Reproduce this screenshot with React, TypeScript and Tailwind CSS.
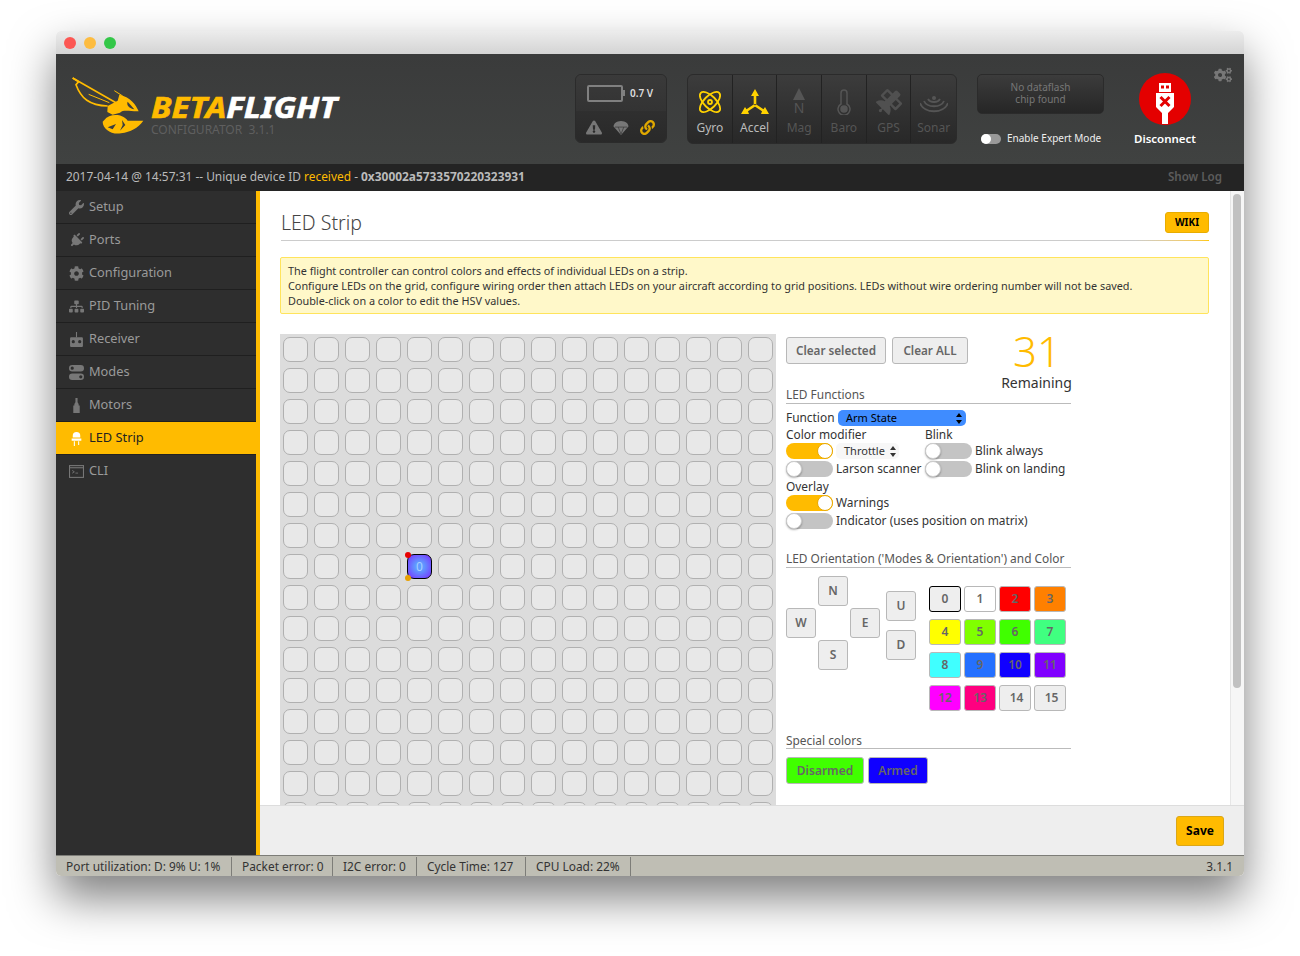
import { FaWrench, FaPlug, FaCog, FaSitemap, FaCogs, FaExclamationTriangle, FaLink, FaSatellite } from 'react-icons/fa';

const NAV = ['Setup', 'Ports', 'Configuration', 'PID Tuning', 'Receiver', 'Modes', 'Motors', 'LED Strip', 'CLI'];

const COLORS: [string, string][] = [
  ['0', 'bg-[#eeeeee] border-black'],
  ['1', 'bg-white'],
  ['2', 'bg-[#ff0000]'],
  ['3', 'bg-[#ff8000]'],
  ['4', 'bg-[#ffff00]'],
  ['5', 'bg-[#80ff00]'],
  ['6', 'bg-[#40ff00]'],
  ['7', 'bg-[#40ff80]'],
  ['8', 'bg-[#40ffff]'],
  ['9', 'bg-[#2570ff]'],
  ['10', 'bg-[#1000ff]'],
  ['11', 'bg-[#8000ff]'],
  ['12', 'bg-[#ff00ff]'],
  ['13', 'bg-[#ff0080]'],
  ['14', 'bg-[#eeeeee] pl-[3px]'],
  ['15', 'bg-[#eeeeee] pl-[3px]'],
];

function NavIcon({ name }: { name: string }) {
  const cls = 'h-[15px] w-[15px]';
  if (name === 'Setup') return <FaWrench className={cls} />;
  if (name === 'Ports') return <FaPlug className={`${cls} rotate-45`} />;
  if (name === 'Configuration') return <FaCog className={cls} />;
  if (name === 'PID Tuning') return <FaSitemap className={cls} />;
  if (name === 'Receiver')
    return (
      <svg viewBox="0 0 14 14" className={cls}>
        <path d="M6.500 0h1v5h-1z" fill="currentColor" />
        <path fillRule="evenodd" fill="currentColor" d="M2 5h10a1 1 0 0 1 1 1v7a1 1 0 0 1-1 1H2a1 1 0 0 1-1-1V6a1 1 0 0 1 1-1zM4 7.500a1.500 1.500 0 1 0 0 3 1.500 1.500 0 0 0 0-3zM10 7.500a1.500 1.500 0 1 0 0 3 1.500 1.500 0 0 0 0-3z" />
      </svg>
    );
  if (name === 'Modes')
    return (
      <svg viewBox="0 0 14 14" className={cls}>
        <path fillRule="evenodd" fill="currentColor" d="M3 0h8a3 3 0 0 1 0 6H3a3 3 0 0 1 0-6zM3 1.500a1.500 1.500 0 1 0 0 3 1.500 1.500 0 0 0 0-3z" />
        <path fillRule="evenodd" fill="currentColor" d="M3 8h8a3 3 0 0 1 0 6H3a3 3 0 0 1 0-6zM11 9.500a1.500 1.500 0 1 0 0 3 1.500 1.500 0 0 0 0-3z" />
      </svg>
    );
  if (name === 'Motors')
    return (
      <svg viewBox="0 0 14 14" className={cls}>
        <path fill="currentColor" d="M6 0h2v4l1 1.500V7h1v7H4V7h1V5.500L6 4z" />
      </svg>
    );
  if (name === 'LED Strip')
    return (
      <svg viewBox="0 0 14 14" className={cls}>
        <path fill="white" d="M3.500 6V4.500a3.500 3.500 0 0 1 7 0V6zM2.500 7h9v2h-9zM4.500 9.500h1V14h-1zM8.500 9.500h1V13h-1z" />
      </svg>
    );
  return (
    <svg viewBox="0 0 14 14" className={cls}>
      <rect x="0.500" y="1.500" width="13" height="11" fill="none" stroke="currentColor" />
      <path d="M0.500 3.500h13" stroke="currentColor" />
      <path d="M3 6l2 1.300L3 8.600M6 8.500h2.500" stroke="currentColor" strokeWidth="0.800" fill="none" />
    </svg>
  );
}

function Wasp() {
  return (
    <svg viewBox="0 0 270 210" className="h-[70px] w-[90px]">
      <g fill="none" stroke="#ffbb00">
        <path d="M20 24L150 98" strokeWidth="5" />
        <path d="M20 24L38 35L30 44C45 85 70 106 125 108" strokeWidth="5" />
        <path d="M68 73L130 98" strokeWidth="3" />
        <path d="M145 62L170 78" strokeWidth="3" />
      </g>
      <path fill="#ffbb00" d="M160 74C195 82 210 105 218 124C195 125 172 118 162 128L140 134L124 126L125 108L155 92z" />
      <path fill="#3c3e3d" d="M185 95L205 118C190 115 180 105 185 95z" />
      <path fill="#ffbb00" d="M115 150C130 130 170 130 185 152L232 152C215 175 195 185 165 190C135 195 110 175 110 155z" />
      <path fill="#3c3e3d" d="M125 172L150 162L140 178zM168 150L178 165L162 182L170 165z" />
    </svg>
  );
}

function Gyro() {
  return (
    <svg viewBox="0 0 26 26" className="h-[26px] w-[26px]" fill="none" stroke="#ffd200" strokeWidth="1.800">
      <ellipse cx="13" cy="13" rx="13" ry="6" transform="rotate(45 13 13)" />
      <ellipse cx="13" cy="13" rx="13" ry="6" transform="rotate(-45 13 13)" />
      <circle cx="13" cy="13" r="2" />
    </svg>
  );
}

function Accel() {
  return (
    <svg viewBox="0 0 28 26" className="h-[26px] w-[28px]" fill="#ffd200">
      <path d="M14 0l4 7h-2.700v8h-2.600V7H10z" />
      <path d="M0 25l4-7 1.500 2.300 7.500-5 1.500 2-7.500 5L8 25z" />
      <path d="M28 25l-4-7-1.500 2.300-7.500-5-1.500 2 7.500 5L20 25z" />
    </svg>
  );
}

function Baro() {
  return (
    <svg viewBox="0 0 14 26" className="h-[26px] w-[14px]" fill="none" stroke="#555555" strokeWidth="1.500">
      <path d="M4 15V4a3 3 0 0 1 6 0v11a6 6 0 1 1-6 0z" />
      <circle cx="7" cy="20" r="3" fill="#555555" />
    </svg>
  );
}

function Sonar() {
  return (
    <svg viewBox="0 0 28 24" className="h-[24px] w-[28px]" fill="none" stroke="#555555" strokeWidth="1.800">
      <circle cx="14" cy="7" r="2" fill="#555555" stroke="none" />
      <path d="M8 8c2 4 10 4 12 0M4 10c3 7 17 7 20 0M0 12c4 11 24 11 28 0" />
    </svg>
  );
}

function Parachute() {
  return (
    <svg viewBox="0 0 16 15" className="h-[14px] w-[16px]" fill="#777777">
      <path d="M8 0C3 0 0 3 0 6l8 9 8-9c0-3-3-6-8-6z" />
      <path d="M1.500 6.500h13M5 6.500L8 14M11 6.500L8 14" stroke="#333333" strokeWidth="0.700" fill="none" />
    </svg>
  );
}

function UsbOff() {
  return (
    <svg viewBox="0 0 52 52" className="h-[52px] w-[52px]">
      <circle cx="26" cy="26" r="26" fill="#e40000" />
      <path fill="white" d="M20 10h12v9h-12z" />
      <path fill="#e40000" d="M22 12.500h3v3h-3zM27 12.500h3v3h-3z" />
      <path fill="white" d="M17 20h18v14l-6 6v11h-6V40l-6-6z" />
      <path d="M21.500 24l9 9M30.500 24l-9 9" stroke="#e40000" strokeWidth="3" />
    </svg>
  );
}

function Sensor({ label, icon, on, last }: { label: string; icon: React.ReactNode; on?: boolean; last?: boolean }) {
  return (
    <div className={`flex w-[45px] flex-col items-center ${last ? '' : 'border-r border-[#222222]'}`}>
      <div className="flex h-[40px] items-end justify-center">{icon}</div>
      <div className={`mt-[5px] text-[12px] leading-[16px] ${on ? 'text-[#bbbbbb]' : 'text-[#555555]'}`}>{label}</div>
    </div>
  );
}

function Toggle({ on }: { on?: boolean }) {
  return (
    <div className={`flex h-[16px] w-[47px] shrink-0 items-center rounded-full ${on ? 'justify-end bg-[#ffbb00]' : 'justify-start bg-[#c4c4c4]'}`}>
      <div className={`h-[16px] w-[16px] rounded-full bg-white ${on ? 'border border-[#e8a800]' : 'border border-[#cccccc] shadow-[0_1px_2px_rgba(0,0,0,0.3)]'}`} />
    </div>
  );
}

function GrayBtn({ children, className }: { children: React.ReactNode; className: string }) {
  return (
    <div className={`flex items-center justify-center rounded-[3px] border border-[#b8b8b8] font-semibold text-[#666666] ${className}`}>
      {children}
    </div>
  );
}

function SectionHead({ children, className }: { children: React.ReactNode; className: string }) {
  return <div className={`border-b border-[#bbbbbb] leading-[14px] text-[#555555] ${className}`}>{children}</div>;
}

function UpDown({ color }: { color: string }) {
  return (
    <svg viewBox="0 0 6 11" className="h-[11px] w-[6px]" fill={color}>
      <path d="M3 0l3 4H0zM3 11L0 7h6z" />
    </svg>
  );
}

export default function App() {
  return (
    <div className="h-[956px] w-[1300px] overflow-hidden bg-white pl-[56px] pt-[31px] font-['Open_Sans',sans-serif]">
      <div className="flex h-[845px] w-[1188px] flex-col overflow-hidden rounded-t-[5px] rounded-b-[5px] shadow-[0_22px_45px_rgba(0,0,0,0.5)]">
        {/* title bar */}
        <div className="flex h-[23px] shrink-0 items-center gap-[8px] bg-gradient-to-b from-[#ececec] to-[#d4d4d4] pl-[8px]">
          <div className="h-[12px] w-[12px] rounded-full bg-[#fc5753]" />
          <div className="h-[12px] w-[12px] rounded-full bg-[#fdbc40]" />
          <div className="h-[12px] w-[12px] rounded-full bg-[#33c748]" />
        </div>

        {/* header */}
        <div className="relative flex h-[110px] shrink-0 bg-gradient-to-b from-[#3a3b3b] to-[#404241]">
          <div className="ml-[10px] mt-[16px]">
            <Wasp />
          </div>
          <div className="ml-[-5px] mt-[40px] w-[424px]">
            <div className="origin-left scale-x-[1.16] font-['Liberation_Sans',sans-serif] text-[28.500px] font-bold italic leading-[26px] text-white [-webkit-text-stroke:0.6px_currentColor]">
              <span className="text-[#ffbb00]">BETA</span>FLIGHT
            </div>
            <div className="mt-[2px] text-[12px] leading-[16px] text-[#5f5f5f]">CONFIGURATOR&nbsp; 3.1.1</div>
          </div>

          <div className="mt-[20px] h-[69px] w-[92px] overflow-hidden rounded-[6px] border border-[#2b2b2b] bg-[#333333]">
            <div className="flex h-[36px] items-center bg-gradient-to-b from-[#3a3a3a] to-[#333333] pl-[11px]">
              <div className="h-[17px] w-[36px] rounded-[2px] border-2 border-[#808080]" />
              <div className="h-[6px] w-[2px] bg-[#808080]" />
              <div className="ml-[5px] text-[10px] font-semibold text-[#dddddd]">0.7 V</div>
            </div>
            <div className="flex h-[33px] items-center gap-[11px] bg-gradient-to-b from-[#2f2f2f] to-[#292929] pl-[10px]">
              <FaExclamationTriangle className="h-[15px] w-[16px] text-[#777777]" />
              <Parachute />
              <FaLink className="h-[15px] w-[15px] text-[#e0a800]" />
            </div>
          </div>

          <div className="ml-[20px] mt-[20px] flex h-[70px] w-[270px] overflow-hidden rounded-[6px] border border-[#2b2b2b] bg-gradient-to-b from-[#3c3c3c] to-[#282828]">
            <Sensor label="Gyro" on icon={<Gyro />} />
            <Sensor label="Accel" on icon={<Accel />} />
            <Sensor
              label="Mag"
              icon={
                <div className="flex flex-col items-center text-[#555555]">
                  <div className="h-0 w-0 border-x-[6px] border-b-[12px] border-x-transparent border-b-[#555555]" />
                  <div className="text-[14px] leading-[15px]">N</div>
                </div>
              }
            />
            <Sensor label="Baro" icon={<Baro />} />
            <Sensor label="GPS" icon={<FaSatellite className="h-[26px] w-[26px] text-[#505050]" />} />
            <Sensor label="Sonar" last icon={<Sonar />} />
          </div>

          <div className="ml-[20px] mt-[20px] w-[127px]">
            <div className="flex h-[40px] flex-col items-center justify-center rounded-[5px] border border-[#2b2b2b] bg-gradient-to-b from-[#3c3c3c] to-[#262626] pb-[2px] text-[10px] leading-[12px] text-[#777777]">
              <div>No dataflash</div>
              <div>chip found</div>
            </div>
            <div className="ml-[4px] mt-[17px] flex items-center">
              <div className="flex h-[10px] w-[20px] shrink-0 rounded-full bg-[#999999]">
                <div className="h-[10px] w-[10px] rounded-full bg-white" />
              </div>
              <div className="ml-[6px] whitespace-nowrap text-[10px] text-[#eeeeee]">Enable Expert Mode</div>
            </div>
          </div>

          <div className="ml-[26px] mt-[19px] flex w-[70px] flex-col items-center">
            <UsbOff />
            <div className="mt-[5px] text-[11.500px] font-semibold leading-[18px] text-white">Disconnect</div>
          </div>

          <FaCogs className="absolute right-[12px] top-[12px] h-[18px] w-[18px] text-[#777777]" />
        </div>

        {/* log */}
        <div className="flex h-[27px] shrink-0 items-center justify-between bg-[#242424] pb-[1px] pl-[10px] pr-[22px] text-[11.920px]">
          <div className="text-[#bbbbbb]">
            2017-04-14 @ 14:57:31 -- Unique device ID <span className="text-[#ffbb00]">received</span> - <span className="font-bold">0x30002a5733570220323931</span>
          </div>
          <div className="text-[11.600px] font-semibold text-[#5c5c5c]">Show Log</div>
        </div>

        {/* body */}
        <div className="flex min-h-0 flex-1">
          <div className="w-[200px] shrink-0 bg-[#2e2e2e]">
            {NAV.map((name) => {
              const active = name === 'LED Strip';
              return (
                <div
                  key={name}
                  className={`flex h-[33px] items-center border-b pl-[13px] text-[12.800px] ${name === 'CLI' ? 'border-transparent text-[#9a9a9a]' : active ? 'border-[#222222] bg-[#ffbb00] text-[#222222]' : 'border-[#1f1f1f] text-[#9a9a9a]'}`}
                >
                  <span className={`flex w-[20px] ${active ? '' : 'text-[#777777]'}`}>
                    <NavIcon name={name} />
                  </span>
                  {name}
                </div>
              );
            })}
          </div>
          <div className="w-[4px] shrink-0 bg-[#ffbb00]" />

          <div className="flex min-w-0 flex-1 flex-col">
            <div className="flex min-h-0 flex-1 bg-white">
              <div className="min-w-0 flex-1 overflow-hidden pl-[20px] pr-[21px]">
                <div className="mt-[21px] flex h-[28px] items-start justify-between pl-[1px]">
                  <div className="text-[19.500px] font-light leading-[22px] text-[#444444]">LED Strip</div>
                  <div className="flex h-[21px] w-[44px] items-center justify-center rounded-[3px] border border-[#e8ac00] bg-[#ffbb00] text-[10px] font-bold text-black">WIKI</div>
                </div>
                <div className="ml-[1px] h-[1px] bg-gradient-to-r from-[#cccccc] via-[#cccccc] via-[92%] to-[#ffc800]" />
                <div className="mt-[16px] h-[57px] rounded-[2px] border border-[#ffe45c] bg-[#fff8c9] px-[7px] py-[5px] text-[10.850px] leading-[15px] text-[#333333]">
                  <div>The flight controller can control colors and effects of individual LEDs on a strip.</div>
                  <div>Configure LEDs on the grid, configure wiring order then attach LEDs on your aircraft according to grid positions. LEDs without wire ordering number will not be saved.</div>
                  <div>Double-click on a color to edit the HSV values.</div>
                </div>

                <div className="mt-[20px] flex">
                  {/* grid */}
                  <div className="h-[600px] w-[496px] shrink-0 bg-[#dcdcdc] p-[3px]">
                    <div className="grid grid-cols-[repeat(16,25px)] gap-[6px]">
                      {Array.from({ length: 256 }, (_, i) =>
                        i === 116 ? (
                          <div key={i} className="relative flex h-[25px] w-[25px] items-center justify-center rounded-[7px] border border-black bg-[radial-gradient(circle,#5f9cff_25%,#7a2dff_100%)] text-[12px] text-[#a8cfff]">
                            0
                            <div className="absolute left-[-3px] top-[-3px] h-[6px] w-[6px] rounded-full bg-[#e80000]" />
                            <div className="absolute bottom-[-3px] left-[-3px] h-[6px] w-[6px] rounded-full bg-[#e8a000]" />
                          </div>
                        ) : (
                          <div key={i} className="h-[25px] w-[25px] rounded-[7px] border border-[#b0b0b0] bg-[#e8e8e8]" />
                        ),
                      )}
                    </div>
                  </div>

                  {/* controls */}
                  <div className="ml-[10px] w-[285px] shrink-0 text-[11.900px] text-[#333333]">
                    <div className="flex h-[70px] border-b border-[#bbbbbb]">
                      <div className="w-[216px] shrink-0">
                        <div className="mt-[3px] flex gap-[6px]">
                          <GrayBtn className="h-[27px] w-[100px] bg-[#eeeeee] text-[11.700px]">Clear selected</GrayBtn>
                          <GrayBtn className="h-[27px] w-[76px] bg-[#eeeeee] text-[11.700px]">Clear ALL</GrayBtn>
                        </div>
                        <div className="mt-[22px] leading-[16px] text-[#555555]">LED Functions</div>
                      </div>
                      <div className="flex w-[69px] flex-col items-center">
                        <div className="ml-[1px] mt-[-1px] h-[36px] text-[42px] font-light leading-[36px] text-[#ffbb00]">31</div>
                        <div className="mt-[4px] whitespace-nowrap text-[14px] leading-[20px] text-[#333333]">Remaining</div>
                      </div>
                    </div>

                    <div className="mt-[6px] flex h-[16px] items-center">
                      <span className="w-[52px]">Function</span>
                      <div className="flex h-[16px] w-[128px] items-center justify-between rounded-[5px] bg-[#3f8cff] pl-[8px] pr-[4px] text-[11px] text-black">
                        Arm State
                        <UpDown color="black" />
                      </div>
                    </div>

                    <div className="flex">
                      <div className="w-[139px]">
                        <div className="h-[16px] leading-[16px]">Color modifier</div>
                        <div className="flex h-[18px] items-center">
                          <Toggle on />
                          <div className="ml-[3px] flex h-[16px] w-[63px] items-center justify-between rounded-[5px] bg-[#f7f7f7] pl-[8px] pr-[3px] text-[11px]">
                            Throttle
                            <UpDown color="#333333" />
                          </div>
                        </div>
                        <div className="flex h-[18px] items-center">
                          <Toggle />
                          <span className="ml-[3px] whitespace-nowrap">Larson scanner</span>
                        </div>
                      </div>
                      <div>
                        <div className="h-[16px] leading-[16px]">Blink</div>
                        <div className="flex h-[18px] items-center">
                          <Toggle />
                          <span className="ml-[3px]">Blink always</span>
                        </div>
                        <div className="flex h-[18px] items-center">
                          <Toggle />
                          <span className="ml-[3px]">Blink on landing</span>
                        </div>
                      </div>
                    </div>

                    <div className="h-[16px] leading-[16px]">Overlay</div>
                    <div className="flex h-[18px] items-center">
                      <Toggle on />
                      <span className="ml-[3px]">Warnings</span>
                    </div>
                    <div className="flex h-[18px] items-center">
                      <Toggle />
                      <span className="ml-[3px]">Indicator (uses position on matrix)</span>
                    </div>

                    <SectionHead className="mt-[21px] h-[17px]">LED Orientation ('Modes &amp; Orientation') and Color</SectionHead>

                    <div className="flex h-[165px]">
                      <div className="mt-[8px] grid h-[94px] grid-cols-[repeat(3,30px)] grid-rows-[repeat(3,30px)] gap-[2px]">
                        <GrayBtn className="col-start-2 row-start-1 bg-[#eeeeee] text-[12px]">N</GrayBtn>
                        <GrayBtn className="col-start-1 row-start-2 bg-[#eeeeee] text-[12px]">W</GrayBtn>
                        <GrayBtn className="col-start-3 row-start-2 bg-[#eeeeee] text-[12px]">E</GrayBtn>
                        <GrayBtn className="col-start-2 row-start-3 bg-[#eeeeee] text-[12px]">S</GrayBtn>
                      </div>
                      <div className="ml-[6px] mt-[23px] flex flex-col gap-[9px]">
                        <GrayBtn className="h-[30px] w-[30px] bg-[#eeeeee] text-[12px]">U</GrayBtn>
                        <GrayBtn className="h-[30px] w-[30px] bg-[#eeeeee] text-[12px]">D</GrayBtn>
                      </div>
                      <div className="ml-[13px] mt-[18px] grid h-[125px] grid-cols-[repeat(4,32px)] grid-rows-[repeat(4,26px)] gap-x-[3px] gap-y-[7px]">
                        {COLORS.map(([label, cls]) => (
                          <GrayBtn key={label} className={`text-[12px] ${cls}`}>
                            {label}
                          </GrayBtn>
                        ))}
                      </div>
                    </div>

                    <SectionHead className="h-[16px]">Special colors</SectionHead>
                    <div className="mt-[8px] flex gap-[4px]">
                      <GrayBtn className="h-[27px] w-[78px] bg-[#40ff00] text-[12px]">Disarmed</GrayBtn>
                      <GrayBtn className="h-[27px] w-[60px] bg-[#1000ff] text-[12px]">Armed</GrayBtn>
                    </div>
                  </div>
                </div>
              </div>

              {/* scrollbar */}
              <div className="w-[14px] shrink-0 border-l border-[#e6e6e6] bg-[#f6f6f6] pl-[2px] pt-[3px]">
                <div className="h-[494px] w-[8px] rounded-full bg-[#c1c1c1]" />
              </div>
            </div>

            <div className="flex h-[50px] shrink-0 items-center justify-end border-t border-[#dddddd] bg-[#eeeeee] pr-[20px]">
              <div className="flex h-[30px] w-[48px] items-center justify-center rounded-[3px] border border-[#dba718] bg-[#ffbb00] text-[12px] font-bold text-black">Save</div>
            </div>
          </div>
        </div>

        {/* status bar */}
        <div className="flex h-[21px] shrink-0 items-center border-t border-[#7d7d78] bg-[#bfbeb4] pt-[1px] text-[11.900px] text-[#333333]">
          <div className="flex h-full w-[176px] items-center whitespace-nowrap border-r border-[#7d7d78] pl-[10px]">Port utilization: D: 9% U: 1%</div>
          <div className="flex h-full w-[101px] items-center border-r border-[#7d7d78] pl-[10px]">Packet error: 0</div>
          <div className="flex h-full w-[84px] items-center border-r border-[#7d7d78] pl-[10px]">I2C error: 0</div>
          <div className="flex h-full w-[109px] items-center border-r border-[#7d7d78] pl-[10px]">Cycle Time: 127</div>
          <div className="flex h-full w-[105px] items-center border-r border-[#7d7d78] pl-[10px]">CPU Load: 22%</div>
          <div className="ml-auto pr-[11px]">3.1.1</div>
        </div>
      </div>
    </div>
  );
}
